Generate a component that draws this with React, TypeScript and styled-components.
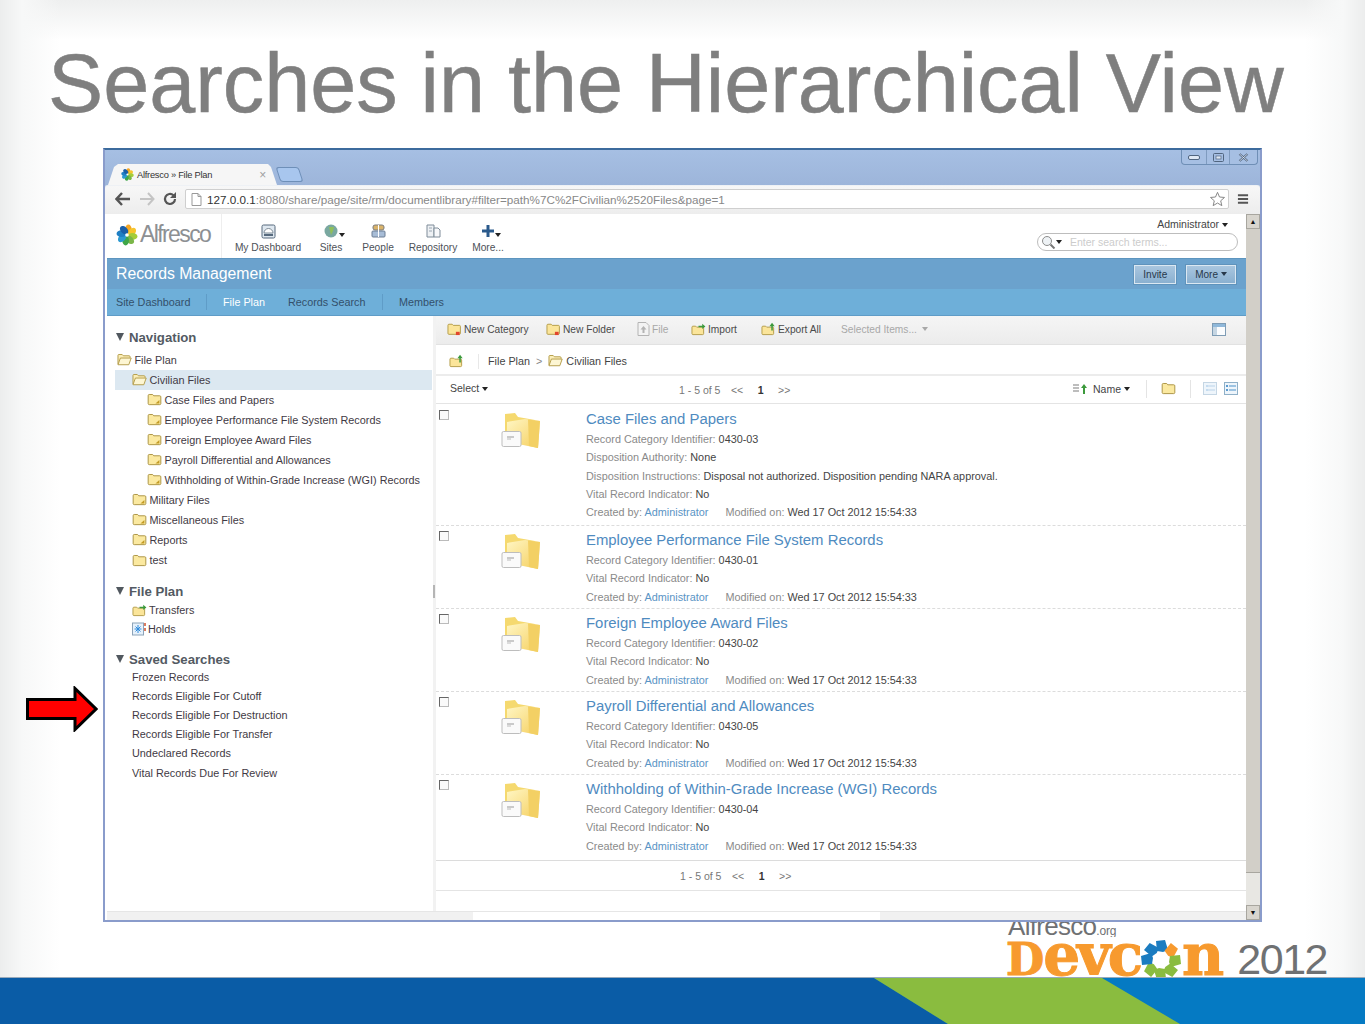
import React from "react";
import styled, { createGlobalStyle } from "styled-components";

const GlobalStyle = createGlobalStyle`
  html, body { margin: 0; padding: 0; background: #fff; }
  body { font-family: "Liberation Sans", Arial, sans-serif; }
`;

const Slide = styled.div`
  width: 1365px;
  height: 1024px;
  overflow: hidden;
  display: flex;
  flex-direction: column;
  background:
    linear-gradient(90deg, #eceded 0, #f7f8f8 22px, rgba(255, 255, 255, 0) 60px),
    linear-gradient(270deg, #eceded 0, #f7f8f8 22px, rgba(255, 255, 255, 0) 60px),
    linear-gradient(180deg, #eeefef 0, #fff 40px);
`;

const SlideTitle = styled.h1`
  margin: 0;
  height: 148px;
  padding: 36px 0 0 48px;
  box-sizing: border-box;
  font-size: 82.75px;
  line-height: 96px;
  font-weight: 400;
  color: #7f7f7f;
  white-space: nowrap;
  -webkit-text-stroke: 0.5px #7f7f7f;
`;

const Stage = styled.div`
  display: flex;
  align-items: flex-start;
  height: 774px;
  flex: none;
`;

const ArrowSlot = styled.div`
  width: 103px;
  padding: 538px 0 0 26px;
  box-sizing: border-box;
  flex: none;
  display: flex;
`;

const BrowserWindow = styled.div`
  width: 1159px;
  height: 774px;
  box-sizing: border-box;
  flex: none;
  border: 2px solid #8a9ccb;
  border-top-color: #3c6b9d;
  background: #a9c0e2;
  display: flex;
  flex-direction: column;
  color: #444;
  font-size: 12px;
`;

const TabStrip = styled.div`
  height: 35px;
  flex: none;
  display: flex;
  align-items: flex-end;
  padding-left: 3px;
  background: linear-gradient(180deg, #a6bfe3, #9db5da);
  position: relative;
`;

const Tab = styled.div`
  width: 169px;
  height: 21px;
  box-sizing: border-box;
  padding: 0 11px 0 13px;
  display: flex;
  align-items: center;
  gap: 3px;
  background: #f6f6f6;
  clip-path: polygon(0 100%, 6px 3px, 10px 0, 160px 0, 163px 3px, 169px 100%);
  font-size: 9.3px;
  letter-spacing: -0.25px;
  color: #333;
`;

const TabClose = styled.span`
  margin-left: auto;
  color: #a0a0a0;
  font-size: 12px;
`;

const NewTab = styled.div`
  width: 21px;
  height: 13px;
  margin: 0 0 3px 1px;
  border: 1px solid #6e8fb8;
  border-radius: 3px;
  background: #a8c6ee;
  transform: skewX(18deg);
`;

const WindowControls = styled.div`
  position: absolute;
  top: 0;
  right: 2px;
  height: 15px;
  display: flex;
  box-sizing: border-box;
  border: 1px solid #6f8fb6;
  border-top: 0;
  border-radius: 0 0 4px 4px;
  background: #a6bfe3;
`;

const WindowButton = styled.div<{ $w: number }>`
  width: ${(p) => p.$w}px;
  display: flex;
  align-items: center;
  justify-content: center;
  border-right: 1px solid #7f9bbf;
  &:last-child { border-right: 0; }
`;

const ToolBar = styled.div`
  height: 29px;
  flex: none;
  display: flex;
  align-items: center;
  padding: 0 8px 2px 10px;
  box-sizing: border-box;
  background: linear-gradient(180deg, #f7f7f7, #ededed);
  border-top: 1px solid #eef1f5;
  border-radius: 3px 3px 0 0;
  gap: 8px;
`;

const AddressBar = styled.div`
  width: 1044px;
  height: 20px;
  flex: none;
  box-sizing: border-box;
  display: flex;
  align-items: center;
  gap: 5px;
  padding: 0 2px 0 5px;
  background: #fff;
  border: 1px solid #cfcfcf;
  border-radius: 2px;
  font-size: 11.7px;
  white-space: nowrap;
  color: #888;
`;

const Host = styled.span`
  color: #333;
`;

const Viewport = styled.div`
  flex: 1;
  min-height: 0;
  display: flex;
  background: #fff;
`;

const Page = styled.div`
  flex: 1;
  min-width: 0;
  padding-left: 2px;
  display: flex;
  flex-direction: column;
`;

const ScrollBar = styled.div`
  width: 14px;
  flex: none;
  display: flex;
  flex-direction: column;
  background: #e8e7e3;
`;

const ScrollButton = styled.div`
  height: 15px;
  flex: none;
  box-sizing: border-box;
  background: #d8d5ce;
  border: 1px solid #a8a69f;
  display: flex;
  align-items: center;
  justify-content: center;
  font-size: 7px;
  color: #111;
`;

const ScrollThumb = styled.div`
  height: 644px;
  flex: none;
  box-sizing: border-box;
  background: #d2cfc8;
  border-bottom: 1px solid #a8a69f;
`;

const ScrollTrack = styled.div`
  flex: 1;
`;

const ShareHeader = styled.div`
  height: 44px;
  flex: none;
  display: flex;
  padding-left: 9px;
  box-sizing: border-box;
`;

const LogoBlock = styled.div`
  width: 105px;
  display: flex;
  align-items: center;
  gap: 2px;
  padding-bottom: 3px;
  border-right: 1px solid #eee;
`;

const LogoWord = styled.span`
  font-size: 23px;
  letter-spacing: -1.6px;
  color: #8d9093;
  font-weight: 400;
`;

const AppNav = styled.div`
  display: flex;
  padding: 9px 0 0 13px;
`;

const AppItem = styled.div<{ $w: number }>`
  width: ${(p) => p.$w}px;
  display: flex;
  flex-direction: column;
  align-items: center;
  gap: 3px;
  font-size: 10.2px;
  color: #4d5158;
  position: relative;
  white-space: nowrap;
`;

const AppIcon = styled.div`
  height: 16px;
  display: flex;
  align-items: center;
  position: relative;
`;

const Caret = styled.span<{ $gap?: number; $color?: string }>`
  display: inline-block;
  width: 0;
  height: 0;
  margin-left: ${(p) => p.$gap ?? 3}px;
  border-left: 3px solid transparent;
  border-right: 3px solid transparent;
  border-top: 4px solid ${(p) => p.$color ?? "#222"};
  vertical-align: middle;
`;

const AppCaret = styled(Caret)`
  position: absolute;
  top: 10px;
  left: calc(100% + 1px);
  margin-left: 0;
`;

const HeaderRight = styled.div`
  margin-left: auto;
  width: 210px;
  display: flex;
  flex-direction: column;
  align-items: flex-end;
  padding: 4px 8px 0 0;
  box-sizing: border-box;
  font-size: 10.5px;
  color: #444;
`;

const UserMenu = styled.div`
  padding-right: 10px;
`;

const SearchBox = styled.div`
  width: 201px;
  height: 18px;
  margin-top: 3px;
  box-sizing: border-box;
  border: 1px solid #bdbdbd;
  border-radius: 9px;
  display: flex;
  align-items: center;
  padding-left: 3px;
  color: #cccccc;
  font-size: 10.5px;
`;

const SearchHint = styled.span`
  margin-left: 8px;
`;

const TitleBar = styled.div`
  height: 31px;
  flex: none;
  box-sizing: border-box;
  display: flex;
  align-items: center;
  justify-content: space-between;
  padding: 0 10px 0 9px;
  background: #6ba2cd;
  border-top: 1px solid #5d95bf;
  color: #fff;
  font-size: 15.8px;
`;

const TitleButtons = styled.div`
  display: flex;
  gap: 10px;
`;

const HeaderButton = styled.div`
  height: 19px;
  padding: 0 8px;
  display: flex;
  align-items: center;
  box-sizing: border-box;
  background: linear-gradient(180deg, #a9c6df, #8ab0d0);
  border: 1px solid #dbe8f2;
  box-shadow: 0 0 0 1px #5f93bc;
  color: #27384a;
  font-size: 10px;
`;

const SiteNav = styled.div`
  height: 27px;
  flex: none;
  box-sizing: border-box;
  display: flex;
  align-items: center;
  padding-left: 9px;
  background: #6eafd9;
  border-bottom: 1px solid #5f9cc7;
  font-size: 10.8px;
  color: #33506b;
`;

const SiteLink = styled.span<{ $active?: boolean; $sep?: boolean; $w: number }>`
  width: ${(p) => p.$w}px;
  flex: none;
  white-space: nowrap;
  color: ${(p) => (p.$active ? "#fff" : "#33506b")};
  border-right: ${(p) => (p.$sep ? "1px solid #5f9cc7" : "0")};
  line-height: 16px;
`;

const Workspace = styled.div`
  flex: 1;
  min-height: 0;
  display: flex;
  flex-direction: column;
`;

const Panes = styled.div`
  flex: 1;
  min-height: 0;
  display: flex;
`;

const Sidebar = styled.div`
  width: 329px;
  flex: none;
  box-sizing: border-box;
  padding-top: 11px;
  border-right: 3px solid #f2f2f2;
  font-size: 10.85px;
  color: #3f3a44;
  position: relative;
`;

const Grip = styled.div`
  position: absolute;
  top: 269px;
  right: -2px;
  width: 2px;
  height: 13px;
  background: #b5b5b5;
`;

const SectionHead = styled.div<{ $top?: number }>`
  margin: ${(p) => p.$top ?? 0}px 0 0 9px;
  height: 20px;
  display: flex;
  align-items: center;
  gap: 5px;
  font-size: 13.2px;
  font-weight: 700;
  color: #535a63;
`;

const Triangle = styled.span`
  width: 0;
  height: 0;
  border-left: 4.5px solid transparent;
  border-right: 4.5px solid transparent;
  border-top: 8px solid #51585f;
`;

const TreeRow = styled.div<{ $depth: number; $selected?: boolean }>`
  height: 20px;
  display: flex;
  align-items: center;
  gap: 2.5px;
  margin: 0 1px 0 8px;
  padding-left: ${(p) => 2 + p.$depth * 15}px;
  background: ${(p) => (p.$selected ? "#dce8f1" : "transparent")};
  white-space: nowrap;
`;

const TreeList = styled.div`
  margin-top: 3px;
`;

const PlanList = styled.div`
  margin-top: -1px;
`;

const PlanRow = styled.div`
  height: 19.5px;
  display: flex;
  align-items: center;
  gap: 2px;
  padding-left: 25px;
`;

const SearchList = styled.div`
  margin-top: -2px;
`;

const SearchRow = styled.div`
  height: 19.2px;
  display: flex;
  align-items: center;
  padding-left: 25px;
  white-space: nowrap;
`;

const Content = styled.div`
  flex: 1;
  min-width: 0;
  display: flex;
  flex-direction: column;
`;

const ActionBar = styled.div`
  height: 29px;
  flex: none;
  box-sizing: border-box;
  display: flex;
  align-items: center;
  padding: 0 20px 2px 11px;
  background: linear-gradient(180deg, #f5f5f5, #ececec);
  border-bottom: 1px solid #e2e2e2;
  font-size: 10.2px;
  color: #4a4a4a;
`;

const Action = styled.div<{ $w: number; $dim?: boolean }>`
  width: ${(p) => p.$w}px;
  flex: none;
  display: flex;
  align-items: center;
  gap: 2px;
  white-space: nowrap;
  color: ${(p) => (p.$dim ? "#a8a8a8" : "#4a4a4a")};
`;

const ActionEnd = styled.div`
  margin-left: auto;
  display: flex;
`;

const CrumbRow = styled.div`
  height: 31px;
  flex: none;
  box-sizing: border-box;
  display: flex;
  align-items: center;
  padding: 3px 0 0 13px;
  border-bottom: 2px solid #ececec;
  font-size: 10.8px;
  color: #444;
`;

const CrumbDivider = styled.div`
  width: 1px;
  height: 15px;
  margin: 0 9px 0 14px;
  background: #e8e8e8;
`;

const CrumbArrow = styled.span`
  margin: 0 6px;
  color: #888;
`;

const CrumbLabel = styled.span`
  margin-left: 3px;
`;

const ListBar = styled.div`
  height: 28px;
  flex: none;
  box-sizing: border-box;
  display: flex;
  align-items: center;
  padding: 0 8px 2px 14px;
  border-bottom: 1px solid #e4e4e4;
  font-size: 10.5px;
  color: #444;
`;

const SelectMenu = styled.div`
  width: 229px;
  flex: none;
  padding-bottom: 2px;
`;

const Pager = styled.div`
  display: flex;
  align-items: center;
  gap: 10.5px;
  color: #777;
  font-size: 10.5px;
`;

const ListPager = styled(Pager)`
  padding-top: 3px;
`;

const PagerNow = styled.b`
  color: #333;
  margin: 0 4px;
`;

const SortArea = styled.div`
  margin-left: auto;
  display: flex;
  align-items: center;
`;

const SortName = styled.span`
  margin-left: 6px;
`;

const VDivider = styled.div<{ $l: number; $r: number }>`
  width: 1px;
  height: 18px;
  background: #e4e4e4;
  margin: 0 ${(p) => p.$r}px 0 ${(p) => p.$l}px;
`;

const ViewGap = styled.span`
  width: 7px;
`;

const RecordRow = styled.div<{ $h: number; $top: number; $last?: boolean }>`
  display: flex;
  box-sizing: border-box;
  border-bottom: ${(p) => (p.$last ? "1px solid #dcdcdc" : "1px dashed #dcdcdc")};
  padding-top: ${(p) => p.$top}px;
  height: ${(p) => p.$h}px;
`;

const Check = styled.div`
  width: 10px;
  height: 10px;
  flex: none;
  margin: 1px 0 0 3px;
  box-sizing: border-box;
  border: 1px solid #666;
  border-right-color: #bbb;
  border-bottom-color: #bbb;
  background: #fafafa;
`;

const ThumbCell = styled.div`
  width: 137px;
  flex: none;
  padding: 3px 0 0 52px;
  box-sizing: border-box;
`;

const RecordBody = styled.div`
  flex: 1;
  min-width: 0;
  font-size: 10.85px;
  line-height: 18.3px;
  color: #8a8a8a;
`;

const RecordTitle = styled.div`
  font-size: 14.9px;
  line-height: 20px;
  margin-bottom: 1px;
  color: #4f8bbf;
`;

const Value = styled.span`
  color: #444;
`;

const UserLink = styled.span`
  color: #5a94c5;
`;

const MetaGap = styled.span`
  display: inline-block;
  width: 17px;
`;

const PagerRow = styled.div`
  height: 30px;
  flex: none;
  box-sizing: border-box;
  display: flex;
  align-items: center;
  padding: 0 0 0 244px;
  border-bottom: 1px solid #e4e4e4;
`;

const BottomStrip = styled.div`
  height: 8px;
  flex: none;
  display: flex;
  border-top: 1px solid #e6e6e6;
  background: #f1f1f1;
`;

const StripThumb = styled.div`
  width: 407px;
  margin-left: 366px;
  background: #fff;
`;

const LogoRow = styled.div`
  height: 55px;
  flex: none;
  display: flex;
  justify-content: flex-end;
  padding-right: 38px;
  overflow: hidden;
`;

const LogoStack = styled.div`
  width: 321px;
  display: flex;
  flex-direction: column;
`;

const OrgLine = styled.div`
  height: 15px;
  overflow: hidden;
  padding-left: 2px;
  color: #6f7173;
  font-size: 26px;
  line-height: 8px;
  letter-spacing: -0.7px;
  white-space: nowrap;
`;

const OrgSuffix = styled.span`
  font-size: 12px;
  letter-spacing: -0.2px;
`;

const DevconLine = styled.div`
  display: flex;
  align-items: flex-start;
  height: 36px;
  margin-top: 4px;
`;

const DevconWord = styled.span`
  font-family: "DejaVu Serif", serif;
  font-weight: 700;
  font-size: 58px;
  line-height: 28px;
  letter-spacing: -3px;
  color: #f79a2e;
  -webkit-text-stroke: 1px #f79a2e;
  display: flex;
  align-items: baseline;
`;

const DevconCap = styled.span`
  font-size: 44px;
  letter-spacing: -1px;
`;

const GearSlot = styled.span`
  align-self: flex-start;
  display: flex;
  margin: -2px 0 0 0;
`;

const YearText = styled.span`
  margin-left: auto;
  font-size: 43px;
  line-height: 36px;
  letter-spacing: -1.5px;
  color: #6f7173;
`;

const Footer = styled.div`
  height: 47px;
  flex: none;
  background: #057ac3;
  position: relative;
  overflow: hidden;
  border-top: 1px solid #9ab;
  box-sizing: border-box;
  &::before {
    content: "";
    position: absolute;
    inset: 0;
    background: #0a5ca6;
    clip-path: polygon(0 0, 874px 0, 948px 100%, 0 100%);
  }
  &::after {
    content: "";
    position: absolute;
    inset: 0;
    background: #8abc3f;
    clip-path: polygon(874px 0, 1102px 0, 1180px 100%, 948px 100%);
  }
`;

const Folder = ({ open = false, size = 15 }: { open?: boolean; size?: number }) => (
  <svg width={size} height={size * 0.87} viewBox="0 0 16 14" style={{ flex: "none" }}>
    {open ? (
      <>
        <path d="M1 12V2.5C1 2 1.3 1.6 2 1.6h3.5l1.3 1.4H13c.6 0 1 .3 1 1V5" fill="#fbeeb8" stroke="#b19a45" />
        <path d="M1 12.6L3.6 5.4h11.6L12.6 12.6z" fill="#fdf6d3" stroke="#b19a45" strokeLinejoin="round" />
      </>
    ) : (
      <>
        <path d="M1.2 2.8c0-.7.4-1.2 1.1-1.2H6l1.2 1.4h6.4c.7 0 1.2.4 1.2 1.1v7.3c0 .7-.5 1.1-1.2 1.1H2.4c-.7 0-1.2-.4-1.2-1.1z" fill="#fbe9a0" stroke="#a8903f" />
        <path d="M9 11.4l4.2-4v4z" fill="#c39b25" />
      </>
    )}
  </svg>
);

const PlainFolder = () => (
  <svg width="15" height="13" viewBox="0 0 16 14" style={{ flex: "none" }}>
    <path d="M1.2 2.8c0-.7.4-1.2 1.1-1.2H6l1.2 1.4h6.4c.7 0 1.2.4 1.2 1.1v7.3c0 .7-.5 1.1-1.2 1.1H2.4c-.7 0-1.2-.4-1.2-1.1z" fill="#fbe9a0" stroke="#a8903f" />
  </svg>
);

const BigFolder = ({ id }: { id: string }) => (
  <svg width="40" height="38" viewBox="0 0 40 38">
    <defs>
      <linearGradient id={id} x1="0" y1="0" x2="1" y2="1">
        <stop offset="0" stopColor="#fff6c4" />
        <stop offset="1" stopColor="#f5cf5e" />
      </linearGradient>
    </defs>
    <path d="M4 2l10-1 3 4 17 3 1 22H4z" fill="#f5d96f" />
    <path d="M6 10l18-3 15 2-2 27-15-3-16-3z" fill={`url(#${id})`} />
    <path d="M27 7.500L39 9l-2 27-9-2z" fill="#f3d064" />
    <rect x="1" y="19.500" width="19" height="15" rx="1.500" fill="#fafafa" stroke="#bdbdbd" />
    <rect x="6" y="24.500" width="7" height="1" fill="#999" />
    <rect x="6" y="26.500" width="4" height="1" fill="#bbb" />
  </svg>
);

const petals = ["#f5a623", "#f7c52d", "#a5cd39", "#7ab648", "#3fa648", "#2c9ad1", "#1f7fc4", "#1a5fa8"];

const Flower = ({ size = 22 }: { size?: number }) => (
  <svg width={size} height={size} viewBox="0 0 24 24" style={{ flex: "none" }}>
    {petals.map((c, i) => (
      <ellipse key={c} cx="13.5" cy="6" rx="3.6" ry="5.4" fill={c} transform={`rotate(${i * 45} 12 12)`} />
    ))}
    <circle cx="12" cy="12" r="2" fill="#fff" />
  </svg>
);

const gearBlades = ["#1b7cc0", "#f79a2e", "#8abc3f", "#8abc3f", "#8abc3f", "#8abc3f", "#1b7cc0", "#1b7cc0"];

const DevconGear = () => (
  <svg width="42" height="42" viewBox="0 0 42 42" style={{ flex: "none" }}>
    {gearBlades.map((c, i) => (
      <path key={i} d="M17 12l-1-10 9-1 3 10-5 2z" fill={c} transform={`rotate(${i * 45} 21 21)`} />
    ))}
  </svg>
);

const ActionIcon = ({ accent }: { accent: string }) => (
  <svg width="15" height="14" viewBox="0 0 16 15" style={{ flex: "none" }}>
    <path d="M1 3.5c0-.7.4-1.1 1-1.1h3.5l1.2 1.2h6.6c.6 0 1 .4 1 1v7.6c0 .6-.4 1-1 1H2c-.6 0-1-.4-1-1z" fill="#fbe59a" stroke="#b19a45" />
    <rect x="9.5" y="10.5" width="4" height="3.5" fill={accent} />
  </svg>
);

const UpIcon = ({ dir = "up" }: { dir?: string }) => (
  <svg width="15" height="14" viewBox="0 0 16 15" style={{ flex: "none" }}>
    <path d="M1 5.5c0-.6.4-1 1-1h3l1 1h6.5c.6 0 1 .4 1 1v6c0 .6-.4 1-1 1H2c-.6 0-1-.4-1-1z" fill="#fbe59a" stroke="#b19a45" />
    {dir === "up" ? (
      <path d="M11 9V4.5H9L11.8.8l2.8 3.7h-2V9z" fill="#3c9a3c" />
    ) : (
      <path d="M8 4h4V2l3.4 2.8L12 7.6V5.6H8z" fill="#3c9a3c" />
    )}
  </svg>
);

const ViewIcon = ({ active }: { active?: boolean }) => (
  <svg width="14" height="13" viewBox="0 0 14 13" style={{ flex: "none" }}>
    <rect x="0.5" y="0.5" width="13" height="12" fill="#eef5fb" stroke={active ? "#8fb0c8" : "#c5d6e4"} />
    <rect x={active ? 2 : 3} y="3" width="2" height="2" fill={active ? "#5b9bd0" : "#c5dcf0"} />
    <rect x="5" y="3" width="7" height="2" fill={active ? "#9cc3e2" : "#d4e4f2"} />
    <rect x={active ? 2 : 3} y="7" width="2" height="2" fill={active ? "#5b9bd0" : "#c5dcf0"} />
    <rect x="5" y="7" width="7" height="2" fill={active ? "#9cc3e2" : "#d4e4f2"} />
  </svg>
);

const RedArrow = () => (
  <svg width="72" height="46" viewBox="0 0 72 46">
    <path d="M1.5 13.5H49V2.5L70 23 49 43.5V32.5H1.5z" fill="#f00" stroke="#000" strokeWidth="3" />
  </svg>
);

const rows = [
  {
    title: "Case Files and Papers",
    id: "0430-03",
    authority: "None",
    instructions: "Disposal not authorized. Disposition pending NARA approval.",
  },
  { title: "Employee Performance File System Records", id: "0430-01" },
  { title: "Foreign Employee Award Files", id: "0430-02" },
  { title: "Payroll Differential and Allowances", id: "0430-05" },
  { title: "Withholding of Within-Grade Increase (WGI) Records", id: "0430-04" },
];

const savedSearches = [
  "Frozen Records",
  "Records Eligible For Cutoff",
  "Records Eligible For Destruction",
  "Records Eligible For Transfer",
  "Undeclared Records",
  "Vital Records Due For Review",
];

const PagerParts = () => (
  <>
    <span>1 - 5 of 5</span>
    <span>&lt;&lt;</span>
    <PagerNow>1</PagerNow>
    <span>&gt;&gt;</span>
  </>
);

export default function App() {
  return (
    <Slide>
      <GlobalStyle />
      <SlideTitle>Searches in the Hierarchical View</SlideTitle>
      <Stage>
        <ArrowSlot>
          <RedArrow />
        </ArrowSlot>
        <BrowserWindow>
          <TabStrip>
            <Tab>
              <Flower size={13} />
              Alfresco » File Plan
              <TabClose>×</TabClose>
            </Tab>
            <NewTab />
            <WindowControls>
              <WindowButton $w={24}>
                <svg width="12" height="6" viewBox="0 0 12 6">
                  <rect x="0.5" y="1.5" width="11" height="4" rx="1.5" fill="#dfe8f4" stroke="#51657f" />
                </svg>
              </WindowButton>
              <WindowButton $w={22}>
                <svg width="11" height="9" viewBox="0 0 11 9">
                  <rect x="0.5" y="0.5" width="10" height="8" rx="1" fill="none" stroke="#51657f" />
                  <rect x="3" y="3" width="5" height="3" fill="#dfe8f4" stroke="#51657f" strokeWidth="0.7" />
                </svg>
              </WindowButton>
              <WindowButton $w={27}>
                <svg width="11" height="9" viewBox="0 0 11 9">
                  <path d="M1.5 1l8 7M9.5 1l-8 7" stroke="#51657f" strokeWidth="2.2" />
                  <path d="M1.5 1l8 7M9.5 1l-8 7" stroke="#dfe8f4" strokeWidth="0.8" />
                </svg>
              </WindowButton>
            </WindowControls>
          </TabStrip>
          <ToolBar>
            <svg width="16" height="14" viewBox="0 0 16 14">
              <path d="M7 1L1.5 7 7 13M2 7h13" fill="none" stroke="#555" strokeWidth="2.4" />
            </svg>
            <svg width="16" height="14" viewBox="0 0 16 14">
              <path d="M9 1l5.5 6L9 13M14 7H1" fill="none" stroke="#c4c4c4" strokeWidth="2" />
            </svg>
            <svg width="14" height="14" viewBox="0 0 14 14">
              <path d="M12 7a5 5 0 1 1-1.6-3.7" fill="none" stroke="#555" strokeWidth="2.2" />
              <path d="M13 0v6H7z" fill="#555" />
            </svg>
            <AddressBar>
              <svg width="11" height="13" viewBox="0 0 11 13" style={{ flex: "none" }}>
                <path d="M1 .5h6l3 3v9H1zM7 .5v3h3" fill="#fff" stroke="#999" />
              </svg>
              <span>
                <Host>127.0.0.1</Host>:8080/share/page/site/rm/documentlibrary#filter=path%7C%2FCivilian%2520Files&amp;page=1
              </span>
              <svg width="17" height="16" viewBox="0 0 24 24" style={{ marginLeft: "auto", flex: "none" }}>
                <path d="M12 2l3 7 7.5.7-5.7 5 1.7 7.3L12 18l-6.500 4 1.700-7.300-5.700-5L9 9z" fill="#fff" stroke="#888" strokeWidth="1.5" />
              </svg>
            </AddressBar>
            <svg width="12" height="12" viewBox="0 0 13 12" style={{ flex: "none" }}>
              <path d="M1 2h11M1 6h11M1 10h11" stroke="#555" strokeWidth="2.2" />
            </svg>
          </ToolBar>
          <Viewport>
            <Page>
              <ShareHeader>
                <LogoBlock>
                  <Flower />
                  <LogoWord>Alfresco</LogoWord>
                </LogoBlock>
                <AppNav>
                  <AppItem $w={66}>
                    <AppIcon>
                      <svg width="15" height="15" viewBox="0 0 15 15">
                        <rect x="1" y="1" width="13" height="13" rx="1.5" fill="#dfe8f0" stroke="#56697d" />
                        <path d="M3 9a4.5 4.5 0 0 1 9 0z" fill="#fff" stroke="#7d8a96" />
                        <path d="M3 11h9" stroke="#56697d" strokeWidth="2" />
                      </svg>
                    </AppIcon>
                    My Dashboard
                  </AppItem>
                  <AppItem $w={60}>
                    <AppIcon>
                      <svg width="14" height="14" viewBox="0 0 14 14">
                        <circle cx="7" cy="7" r="6.5" fill="#7aa8a0" />
                        <path d="M5 3h5l-1 4-2 4-1-4z" fill="#8fc05a" />
                      </svg>
                      <AppCaret />
                    </AppIcon>
                    Sites
                  </AppItem>
                  <AppItem $w={34}>
                    <AppIcon>
                      <svg width="15" height="14" viewBox="0 0 15 14">
                        <rect x="2" y="1" width="11" height="5" rx="2" fill="#d9b36a" stroke="#7c7c7c" />
                        <rect x="1" y="7" width="13" height="6" rx="1" fill="#a7bcd6" stroke="#6d7f95" />
                        <path d="M7.5 1v12" stroke="#fff" />
                      </svg>
                    </AppIcon>
                    People
                  </AppItem>
                  <AppItem $w={76}>
                    <AppIcon>
                      <svg width="15" height="14" viewBox="0 0 15 14">
                        <path d="M1 1h7v12H1z" fill="#eef1f4" stroke="#7f8c99" />
                        <path d="M8 4h4l2 2v7H8z" fill="#f7f8fa" stroke="#7f8c99" />
                        <path d="M3 4h3M3 7h3" stroke="#9aa6b2" />
                      </svg>
                    </AppIcon>
                    Repository
                  </AppItem>
                  <AppItem $w={34}>
                    <AppIcon>
                      <svg width="12" height="12" viewBox="0 0 12 12">
                        <path d="M4.5 0h3v4.5H12v3H7.5V12h-3V7.5H0v-3h4.5z" fill="#2a5a8c" />
                      </svg>
                      <AppCaret />
                    </AppIcon>
                    More...
                  </AppItem>
                </AppNav>
                <HeaderRight>
                  <UserMenu>
                    Administrator
                    <Caret />
                  </UserMenu>
                  <SearchBox>
                    <svg width="15" height="14" viewBox="0 0 15 14">
                      <circle cx="6" cy="6" r="4.5" fill="#eef2f5" stroke="#8c8c8c" />
                      <path d="M9.5 9.5l4 4" stroke="#777" strokeWidth="2" />
                    </svg>
                    <Caret $gap={0} />
                    <SearchHint>Enter search terms...</SearchHint>
                  </SearchBox>
                </HeaderRight>
              </ShareHeader>
              <TitleBar>
                Records Management
                <TitleButtons>
                  <HeaderButton>Invite</HeaderButton>
                  <HeaderButton>
                    More
                    <Caret $color="#27384a" />
                  </HeaderButton>
                </TitleButtons>
              </TitleBar>
              <SiteNav>
                <SiteLink $w={90} $sep>Site Dashboard</SiteLink>
                <SiteLink $w={16} />
                <SiteLink $w={65} $active>File Plan</SiteLink>
                <SiteLink $w={94} $sep>Records Search</SiteLink>
                <SiteLink $w={16} />
                <SiteLink $w={60}>Members</SiteLink>
              </SiteNav>
              <Workspace>
                <Panes>
                  <Sidebar>
                    <Grip />
                    <SectionHead>
                      <Triangle />
                      Navigation
                    </SectionHead>
                    <TreeList>
                      <TreeRow $depth={0}>
                        <Folder open />
                        File Plan
                      </TreeRow>
                      <TreeRow $depth={1} $selected>
                        <Folder open />
                        Civilian Files
                      </TreeRow>
                      {rows.map((r) => (
                        <TreeRow $depth={2} key={r.id}>
                          <Folder />
                          {r.title}
                        </TreeRow>
                      ))}
                      {["Military Files", "Miscellaneous Files", "Reports"].map((t) => (
                        <TreeRow $depth={1} key={t}>
                          <Folder />
                          {t}
                        </TreeRow>
                      ))}
                      <TreeRow $depth={1}>
                        <PlainFolder />
                        test
                      </TreeRow>
                    </TreeList>
                    <SectionHead $top={11}>
                      <Triangle />
                      File Plan
                    </SectionHead>
                    <PlanList>
                      <PlanRow>
                        <UpIcon dir="right" />
                        Transfers
                      </PlanRow>
                      <PlanRow>
                        <svg width="14" height="14" viewBox="0 0 14 14" style={{ flex: "none" }}>
                          <rect x="0.5" y="1" width="11" height="12" fill="#e6f1fb" stroke="#8ca3b8" />
                          <path d="M6 3v8M2.5 7h7M3.500 4.500l5 5M8.500 4.500l-5 5" stroke="#2f8bdc" />
                          <path d="M13 1v3" stroke="#d0512b" strokeWidth="1.5" />
                          <path d="M13 6v3" stroke="#d0512b" strokeWidth="1.5" />
                        </svg>
                        Holds
                      </PlanRow>
                    </PlanList>
                    <SectionHead $top={10}>
                      <Triangle />
                      Saved Searches
                    </SectionHead>
                    <SearchList>
                      {savedSearches.map((s) => (
                        <SearchRow key={s}>{s}</SearchRow>
                      ))}
                    </SearchList>
                  </Sidebar>
                  <Content>
                    <ActionBar>
                      <Action $w={99}>
                        <ActionIcon accent="#e2452c" />
                        New Category
                      </Action>
                      <Action $w={91}>
                        <ActionIcon accent="#e2452c" />
                        New Folder
                      </Action>
                      <Action $w={54} $dim>
                        <svg width="13" height="14" viewBox="0 0 13 14">
                          <path d="M1 .5h8l3 3v10H1z" fill="#f3f3f3" stroke="#b4b4b4" />
                          <path d="M6.5 4l3 3.5h-2V11h-2V7.5h-2z" fill="#b4b4b4" />
                        </svg>
                        File
                      </Action>
                      <Action $w={70}>
                        <UpIcon dir="right" />
                        Import
                      </Action>
                      <Action $w={80}>
                        <UpIcon />
                        Export All
                      </Action>
                      <Action $dim $w={100}>
                        Selected Items...
                        <Caret $color="#a8a8a8" />
                      </Action>
                      <ActionEnd>
                        <svg width="14" height="13" viewBox="0 0 14 13">
                          <rect x="0.5" y="0.5" width="13" height="12" fill="#fafcfe" stroke="#7e9cb5" />
                          <rect x="1" y="1" width="12" height="3" fill="#8fb8da" />
                          <rect x="1" y="4" width="4" height="8" fill="#c6d6e3" />
                        </svg>
                      </ActionEnd>
                    </ActionBar>
                    <CrumbRow>
                      <UpIcon />
                      <CrumbDivider />
                      File Plan
                      <CrumbArrow>&gt;</CrumbArrow>
                      <Folder open />
                      <CrumbLabel>Civilian Files</CrumbLabel>
                    </CrumbRow>
                    <ListBar>
                      <SelectMenu>
                        Select
                        <Caret />
                      </SelectMenu>
                      <ListPager>
                        <PagerParts />
                      </ListPager>
                      <SortArea>
                        <svg width="14" height="10" viewBox="0 0 14 10">
                          <path d="M0 1h6M0 4h6M0 7h6" stroke="#bdbdbd" strokeWidth="2" />
                          <path d="M10 10V4H8l3-4 3 4h-2v6z" fill="#3c9a3c" />
                        </svg>
                        <SortName>Name</SortName>
                        <Caret />
                        <VDivider $l={16} $r={14} />
                        <PlainFolder />
                        <VDivider $l={14} $r={12} />
                        <ViewIcon />
                        <ViewGap />
                        <ViewIcon active />
                      </SortArea>
                    </ListBar>
                    {rows.map((r, i) => (
                      <RecordRow
                        key={r.id}
                        $h={i === 0 ? 122 : i === rows.length - 1 ? 86 : 83}
                        $top={i === 0 ? 5 : 4}
                        $last={i === rows.length - 1}
                      >
                        <Check />
                        <ThumbCell>
                          <BigFolder id={`folder-${r.id}`} />
                        </ThumbCell>
                        <RecordBody>
                          <RecordTitle>{r.title}</RecordTitle>
                          <div>
                            Record Category Identifier: <Value>{r.id}</Value>
                          </div>
                          {r.authority && (
                            <div>
                              Disposition Authority: <Value>{r.authority}</Value>
                            </div>
                          )}
                          {r.instructions && (
                            <div>
                              Disposition Instructions: <Value>{r.instructions}</Value>
                            </div>
                          )}
                          <div>
                            Vital Record Indicator: <Value>No</Value>
                          </div>
                          <div>
                            Created by: <UserLink>Administrator</UserLink>
                            <MetaGap />
                            Modified on: <Value>Wed 17 Oct 2012 15:54:33</Value>
                          </div>
                        </RecordBody>
                      </RecordRow>
                    ))}
                    <PagerRow>
                      <Pager>
                        <PagerParts />
                      </Pager>
                    </PagerRow>
                  </Content>
                </Panes>
                <BottomStrip>
                  <StripThumb />
                </BottomStrip>
              </Workspace>
            </Page>
            <ScrollBar>
              <ScrollButton>▲</ScrollButton>
              <ScrollThumb />
              <ScrollTrack />
              <ScrollButton>▼</ScrollButton>
            </ScrollBar>
          </Viewport>
        </BrowserWindow>
      </Stage>
      <LogoRow>
        <LogoStack>
          <OrgLine>
            Alfresco<OrgSuffix>.org</OrgSuffix>
          </OrgLine>
          <DevconLine>
            <DevconWord>
              <DevconCap>D</DevconCap>
              evc
              <GearSlot>
                <DevconGear />
              </GearSlot>
              n
            </DevconWord>
            <YearText>2012</YearText>
          </DevconLine>
        </LogoStack>
      </LogoRow>
      <Footer />
    </Slide>
  );
}
